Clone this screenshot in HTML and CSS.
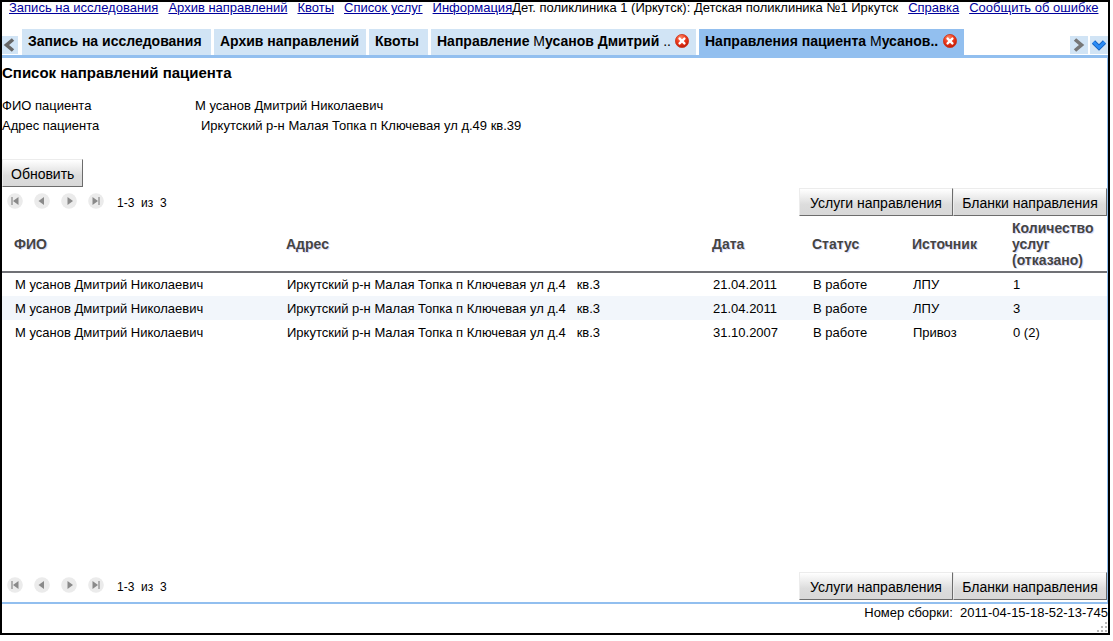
FILE: index.html
```html
<!DOCTYPE html>
<html lang="ru">
<head>
<meta charset="utf-8">
<title>Список направлений пациента</title>
<link rel="stylesheet" href="styles.css">
</head>
<body>
<svg class="defs" aria-hidden="true">
  <defs>
    <radialGradient id="red" cx="40%" cy="25%" r="75%"><stop offset="0" stop-color="#ff8a68"/><stop offset=".5" stop-color="#ee3a1c"/><stop offset="1" stop-color="#c01c08"/></radialGradient>
    <symbol id="close" viewBox="0 0 14 14"><circle cx="7" cy="7" r="6.6" fill="url(#red)" stroke="#c8381e" stroke-width=".8"/><path d="M4.6 4.6l4.8 4.8M9.4 4.6L4.6 9.4" stroke="#fff" stroke-width="2.4" stroke-linecap="round"/></symbol>
    <symbol id="first" viewBox="0 0 16 16"><circle cx="8" cy="8" r="7.8" fill="#ebebeb"/><path d="M4 4h2v8H4z" fill="#b0b0b0"/><path d="M11.5 4v8L6 8z" fill="#8a8a8a"/></symbol>
    <symbol id="prev" viewBox="0 0 16 16"><circle cx="8" cy="8" r="7.8" fill="#ebebeb"/><path d="M10 4v8L4.500 8z" fill="#8a8a8a"/></symbol>
    <symbol id="next" viewBox="0 0 16 16"><circle cx="8" cy="8" r="7.8" fill="#ebebeb"/><path d="M6.500 4v8L12 8z" fill="#8a8a8a"/></symbol>
    <symbol id="last" viewBox="0 0 16 16"><circle cx="8" cy="8" r="7.8" fill="#ebebeb"/><path d="M10 4h2v8h-2z" fill="#b0b0b0"/><path d="M4.500 4v8L10 8z" fill="#8a8a8a"/></symbol>
  </defs>
</svg>
<div class="frame">
  <header class="topbar">
    <nav class="links">
      <a href="#">Запись на исследования</a>
      <a href="#">Архив направлений</a>
      <a href="#">Квоты</a>
      <a href="#">Список услуг</a>
      <a href="#">Информация</a>
    </nav>
    <div class="links">
      <span>Дет. поликлиника 1 (Иркутск): Детская поликлиника №1 Иркутск</span>
      <a href="#">Справка</a>
      <a href="#">Сообщить об ошибке</a>
    </div>
  </header>

  <div class="tabbar">
    <button class="scroll back" aria-label="Назад"><svg viewBox="0 0 16 18"><path d="M11 3.500L4.500 9l6.500 5.500" fill="none" stroke="#666" stroke-width="3.600"/></svg></button>
    <div class="tabs">
      <div class="tab tab-a"><button class="label">Запись на исследования</button></div>
      <div class="tab tab-b"><button class="label">Архив направлений</button></div>
      <div class="tab tab-c"><button class="label">Квоты</button></div>
      <div class="tab tab-d"><button class="label">Направление <span class="thin">М</span>усанов Дмитрий <span class="thin">..</span></button><button class="close" aria-label="Закрыть"><svg><use href="#close"/></svg></button></div>
      <div class="tab tab-d active"><button class="label">Направления пациента <span class="thin">М</span>усанов..</button><button class="close" aria-label="Закрыть"><svg><use href="#close"/></svg></button></div>
    </div>
    <button class="scroll" aria-label="Вперёд"><svg viewBox="0 0 18 18"><path d="M5 3.500L11.500 9 5 14.500" fill="none" stroke="#777" stroke-width="3.600"/></svg></button>
    <button class="scroll" aria-label="Все вкладки"><svg viewBox="0 0 18 18"><path d="M3.500 6L9 11.500 14.500 6" fill="none" stroke="#1560c0" stroke-width="4.600"/><path d="M3.500 6L9 11.500 14.500 6" fill="none" stroke="#2b8cf5" stroke-width="3"/></svg></button>
  </div>

  <main class="content">
    <h1>Список направлений пациента</h1>
    <dl class="info">
      <dt>ФИО пациента</dt><dd>М усанов Дмитрий Николаевич</dd>
      <dt>Адрес пациента</dt><dd class="address">Иркутский р-н Малая Топка п Ключевая ул д.49 кв.39</dd>
    </dl>
    <div class="actions"><button class="btn">Обновить</button></div>
    <div class="toolbar">
      <div class="pager">
        <button aria-label="Первая"><svg><use href="#first"/></svg></button>
        <button aria-label="Предыдущая"><svg><use href="#prev"/></svg></button>
        <button aria-label="Следующая"><svg><use href="#next"/></svg></button>
        <button aria-label="Последняя"><svg><use href="#last"/></svg></button>
        <span class="range">1-3&nbsp; из&nbsp; 3</span>
      </div>
      <div class="group"><button class="btn">Услуги направления</button><button class="btn">Бланки направления</button></div>
    </div>
    <table>
      <colgroup><col class="c-name"><col><col class="c-small"><col class="c-small"><col class="c-small"><col class="c-count"></colgroup>
      <thead><tr><th>ФИО</th><th>Адрес</th><th>Дата</th><th>Статус</th><th>Источник</th><th>Количество услуг (отказано)</th></tr></thead>
      <tbody>
        <tr><td>М усанов Дмитрий Николаевич</td><td>Иркутский р-н Малая Топка п Ключевая ул д.4&nbsp;&nbsp; кв.3</td><td>21.04.2011</td><td>В работе</td><td>ЛПУ</td><td>1</td></tr>
        <tr><td>М усанов Дмитрий Николаевич</td><td>Иркутский р-н Малая Топка п Ключевая ул д.4&nbsp;&nbsp; кв.3</td><td>21.04.2011</td><td>В работе</td><td>ЛПУ</td><td>3</td></tr>
        <tr><td>М усанов Дмитрий Николаевич</td><td>Иркутский р-н Малая Топка п Ключевая ул д.4&nbsp;&nbsp; кв.3</td><td>31.10.2007</td><td>В работе</td><td>Привоз</td><td>0 (2)</td></tr>
      </tbody>
    </table>
    <div class="toolbar bottom">
      <div class="pager">
        <button aria-label="Первая"><svg><use href="#first"/></svg></button>
        <button aria-label="Предыдущая"><svg><use href="#prev"/></svg></button>
        <button aria-label="Следующая"><svg><use href="#next"/></svg></button>
        <button aria-label="Последняя"><svg><use href="#last"/></svg></button>
        <span class="range">1-3&nbsp; из&nbsp; 3</span>
      </div>
      <div class="group"><button class="btn">Услуги направления</button><button class="btn">Бланки направления</button></div>
    </div>
  </main>
  <footer>
    <span>Номер сборки:&nbsp; 2011-04-15-18-52-13-745</span>
    <svg class="grip" viewBox="0 0 10 10" aria-hidden="true"><path d="M8 0h2v2H8zM4 4h2v2H4zM8 4h2v2H8zM0 8h2v2H0zM4 8h2v2H4zM8 8h2v2H8z" fill="#b8b8b8"/></svg>
  </footer>
</div>
</body>
</html>
```

FILE: styles.css
```css
* { box-sizing: border-box; }
body {
  margin: 0;
  background: #fff;
  color: #000;
  font: 13px/16px "Liberation Sans", Arial, sans-serif;
}
button { margin: 0; padding: 0; border: 0; background: none; color: inherit; font: inherit; }
svg { display: block; }
.defs { position: absolute; width: 0; height: 0; }

.frame {
  display: flex;
  flex-direction: column;
  min-height: calc(100vh - 6px);
  margin: 0 3px 6px 0;
  border: 2px solid #000;
}

.topbar {
  display: flex;
  justify-content: space-between;
  height: 27px;
  padding: 0 10px 0 7px;
  line-height: 12px;
  white-space: nowrap;
}
.links { display: flex; gap: 10px; }
.links a { color: #00009c; }

.tabbar {
  display: flex;
  align-items: flex-end;
  gap: 2px;
  border-bottom: 3px solid #92bfef;
}
.tabs { display: flex; flex: 1; gap: 3px; padding-left: 2px; white-space: nowrap; }
.tab {
  display: flex;
  justify-content: space-between;
  height: 26px;
  padding: 0 7px 2px 6px;
  background: #d1e4f5;
  font-size: 14px;
  font-weight: bold;
}
.tab-a { width: 189px; }
.tab-b { width: 152px; }
.tab-c { width: 59px; }
.tab-d { width: 265px; }
.active { background: #92bfef; }
.thin { font-weight: normal; }
.close svg { width: 14px; height: 14px; }
.scroll { width: 18px; height: 18px; margin-bottom: 1px; background: #d1e4f5; }
.scroll svg { width: 100%; height: 18px; }
.back { width: 16px; }

.content {
  display: flex;
  flex: 1;
  flex-direction: column;
  border-right: 1px solid #92bfef;
  border-bottom: 2px solid #92bfef;
}
h1 { margin: 6px 0 14px; font-size: 15px; line-height: 18px; }
.info {
  display: grid;
  grid-template-columns: 193px 1fr;
  margin: 0;
  line-height: 20px;
}
.info dd { margin: 0; }
.info .address { padding-left: 6px; }
.actions { padding-top: 23px; }
.btn {
  display: block;
  height: 28px;
  padding: 2px 8px 0;
  border: 1px solid #6c6c6c;
  border-top-color: #ececec;
  border-left-color: #ececec;
  background: linear-gradient(#fff, #dcdcdc 60%, #d8d8d8);
  font-size: 14px;
  white-space: nowrap;
}
.toolbar { display: flex; justify-content: space-between; padding-top: 1px; }
.bottom { margin-top: auto; padding-bottom: 2px; }
.group { display: flex; }
.group .btn { min-width: 154px; }
.pager { display: flex; gap: 11px; padding: 5px 0 0 5px; }
.pager svg { width: 16px; height: 16px; }
.pager button { height: 16px; }
.range { padding: 2px 0 0 2px; font-size: 12px; }

table { width: 100%; border-collapse: collapse; table-layout: fixed; }
.c-name { width: 272px; }
.c-small { width: 100px; }
.c-count { width: 107px; }
th {
  height: 56px;
  padding: 2px 4px 2px 12px;
  border-bottom: 2px solid #707176;
  color: #444;
  font-size: 14px;
  text-align: left;
  text-shadow: 1px 1px 0 #dcdcf8;
}
td { height: 24px; padding: 1px 0 0 13px; white-space: nowrap; }
tbody tr:nth-child(even) { background: #f2f6fb; }

footer { height: 29px; padding-top: 1px; text-align: right; }
.grip { width: 10px; height: 10px; margin: 1px 1px 0 auto; }
```
